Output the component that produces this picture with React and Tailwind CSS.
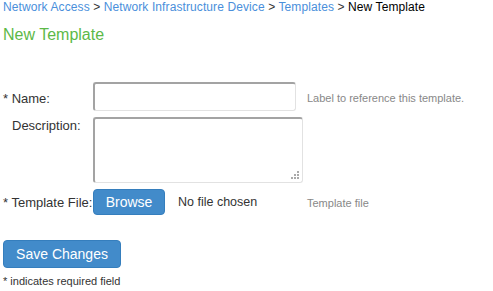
const App = () => {
  return (
    <div className="min-h-[291px] bg-white px-[3px] font-['Liberation_Sans',Arial,sans-serif] text-[#333]">
      <div className="text-[12px] leading-[14px] tracking-[0.1px]">
        <a className="text-[#4a8fdb]">Network Access</a>
        <span className="text-[#333]"> &gt; </span>
        <a className="text-[#4a8fdb]">Network Infrastructure Device</a>
        <span className="text-[#333]"> &gt; </span>
        <a className="text-[#4a8fdb]">Templates</a>
        <span className="text-[#333]"> &gt; </span>
        <span className="text-black">New Template</span>
      </div>
      <h1 className="mt-[12px] text-[16px] leading-[18px] text-[#5cb947]">New Template</h1>

      <form className="mt-[38px]" onSubmit={(e) => e.preventDefault()}>
        <div className="flex items-center">
          <label className="mt-[3px] w-[90px] text-[13px] leading-[15px]">* Name:</label>
          <input
            type="text"
            className="h-[29px] w-[203px] rounded-[3px] border-t-2 border-l-2 border-b border-r border-t-[#a3a3a3] border-l-[#a3a3a3] border-b-[#e2e2e2] border-r-[#e2e2e2] px-1 text-[13px] outline-none"
          />
          <span className="ml-[11px] mt-[4px] text-[11px] text-[#888]">Label to reference this template.</span>
        </div>

        <div className="mt-[6px] flex items-start">
          <label className="w-[90px] pl-[9px] pt-[1px] text-[13px] leading-[15px]">Description:</label>
          <div className="relative">
            <textarea className="block h-[66px] w-[210px] resize-none rounded-[3px] border-t-2 border-l-2 border-b border-r border-t-[#a3a3a3] border-l-[#a3a3a3] border-b-[#e2e2e2] border-r-[#e2e2e2] px-1 text-[13px] outline-none"></textarea>
            {/* resize grip dots */}
            <div className="pointer-events-none absolute bottom-[4px] right-[4px] grid grid-cols-3 gap-[1px]">
              <span className="h-[2px] w-[2px]" />
              <span className="h-[2px] w-[2px]" />
              <span className="h-[2px] w-[2px] bg-[#aaa]" />
              <span className="h-[2px] w-[2px]" />
              <span className="h-[2px] w-[2px] bg-[#aaa]" />
              <span className="h-[2px] w-[2px] bg-[#aaa]" />
              <span className="h-[2px] w-[2px] bg-[#aaa]" />
              <span className="h-[2px] w-[2px] bg-[#aaa]" />
              <span className="h-[2px] w-[2px] bg-[#aaa]" />
            </div>
          </div>
        </div>

        <div className="mt-[6px] flex items-center">
          <label className="w-[90px] whitespace-nowrap text-[13px] leading-[15px]">* Template File:</label>
          <button
            type="button"
            className="h-[26px] w-[72px] rounded-[4px] border border-[#357ebd] bg-[#428bca] text-[14px] text-white"
          >
            Browse
          </button>
          <span className="ml-[13px] w-[129px] text-[12.5px]">No file chosen</span>
          <span className="mt-[2px] text-[11px] text-[#888]">Template file</span>
        </div>

        <button
          type="submit"
          className="mt-[25px] h-[28px] w-[118px] rounded-[4px] border border-[#357ebd] bg-[#428bca] text-[14px] text-white"
        >
          Save Changes
        </button>
        <p className="mt-[7px] text-[11px] leading-[13px]">* indicates required field</p>
      </form>
    </div>
  );
};

export default App;
